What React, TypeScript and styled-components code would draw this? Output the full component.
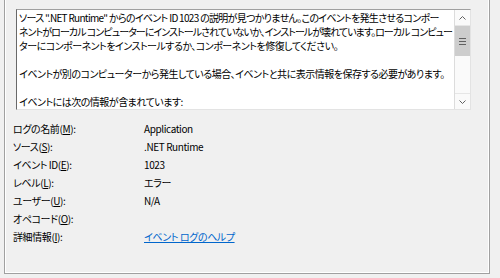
import React from "react";
import styled, { createGlobalStyle } from "styled-components";

const GlobalStyle = createGlobalStyle`
  html, body {
    margin: 0;
    padding: 0;
    background: #f0f0f0;
  }
  body {
    font-family: "Noto Sans CJK JP", "Noto Sans", sans-serif;
    font-size: 10px;
    letter-spacing: -0.4px;
    color: #000;
  }
`;

const Window = styled.div`
  width: 500px;
  height: 278px;
  overflow: hidden;
  background: #f0f0f0;
`;

const Panel = styled.div`
  margin-left: 4px;
  width: 486px;
  height: 274px;
  border-left: 1px solid #a0a0a0;
  border-right: 1px solid #a0a0a0;
  border-bottom: 1px solid #a0a0a0;
  box-shadow: inset 1px 0 #ffffff, inset -1px 0 #ffffff, inset 0 -1px #ffffff;
  padding: 9px 0 0 11px;
  box-sizing: border-box;
  font-feature-settings: "palt";
`;

const TextBox = styled.div`
  display: flex;
  width: 455px;
  height: 101px;
  box-sizing: border-box;
  background: #ffffff;
  border-top: 1px solid #a0a0a0;
  border-left: 1px solid #696969;
  border-right: 1px solid #e3e3e3;
  border-bottom: 1px solid #e3e3e3;
`;

const TextArea = styled.div`
  flex: 1;
  overflow: hidden;
  padding: 1px 0 0 2px;
`;

const Line = styled.div<{ $spacing: number }>`
  height: 14px;
  line-height: 14px;
  white-space: nowrap;
  letter-spacing: ${({ $spacing }) => `${$spacing}px`};
`;

const ScrollBar = styled.div`
  width: 15px;
  display: flex;
  flex-direction: column;
  background: #fafafa;
  border-left: 1px solid #dcdcdc;
`;

const ArrowButton = styled.div`
  height: 15px;
  display: flex;
  align-items: center;
  justify-content: center;
  border-bottom: 1px solid #e6e6e6;

  &:last-child {
    border-bottom: none;
    border-top: 1px solid #e6e6e6;
  }
`;

const Track = styled.div`
  flex: 1;
  display: flex;
  flex-direction: column;
`;

const Thumb = styled.div`
  height: 30px;
  background: #cdcdcd;
  display: flex;
  flex-direction: column;
  align-items: center;
  justify-content: center;
  gap: 2px;
`;

const Grip = styled.span`
  width: 7px;
  height: 1px;
  background: #606060;
`;

const InfoGrid = styled.div`
  display: grid;
  grid-template-columns: 131px 1fr;
  grid-auto-rows: 18px;
  align-items: center;
  margin-top: 9px;
  margin-left: -3px;
`;

const Label = styled.div`
  white-space: nowrap;
`;

const Value = styled.div`
  white-space: nowrap;
`;

const HelpLink = styled.a`
  color: #0066cc;
  text-decoration: underline;
  cursor: pointer;
`;

const Chevron = ({ up }: { up?: boolean }) => (
  <svg width="7" height="4" viewBox="0 0 7 4">
    <polyline
      points={up ? "0.5,3.5 3.5,0.5 6.5,3.5" : "0.5,0.5 3.5,3.5 6.5,0.5"}
      fill="none"
      stroke="#606060"
      strokeWidth="1"
    />
  </svg>
);

const rows: { label: string; key: string; value: string; link?: boolean }[] = [
  { label: "ログの名前(", key: "M", value: "Application" },
  { label: "ソース(", key: "S", value: ".NET Runtime" },
  { label: "イベント ID(", key: "E", value: "1023" },
  { label: "レベル(", key: "L", value: "エラー" },
  { label: "ユーザー(", key: "U", value: "N/A" },
  { label: "オペコード(", key: "O", value: "" },
  { label: "詳細情報(", key: "I", value: "イベント ログのヘルプ", link: true },
];

// letter spacing per line so the wrapped lines end where the original ones do
const lines: { text: string; spacing: number }[] = [
  { text: "ソース \".NET Runtime\" からのイベント ID 1023 の説明が見つかりません。このイベントを発生させるコンポー", spacing: -0.7 },
  { text: "ネントがローカル コンピューターにインストールされていないか、インストールが壊れています。ローカル コンピュー", spacing: -0.95 },
  { text: "ターにコンポーネントをインストールするか、コンポーネントを修復してください。", spacing: -0.5 },
  { text: "", spacing: 0 },
  { text: "イベントが別のコンピューターから発生している場合、イベントと共に表示情報を保存する必要があります。", spacing: -0.5 },
  { text: "", spacing: 0 },
  { text: "イベントには次の情報が含まれています:", spacing: -0.5 },
];

export default function App() {
  return (
    <Window>
      <GlobalStyle />
      <Panel>
        <TextBox>
          <TextArea>
            {lines.map((l, i) => (
              <Line key={i} $spacing={l.spacing}>
                {l.text || "\u00a0"}
              </Line>
            ))}
          </TextArea>
          <ScrollBar>
            <ArrowButton>
              <Chevron up />
            </ArrowButton>
            <Track>
              <Thumb>
                <Grip />
                <Grip />
                <Grip />
              </Thumb>
            </Track>
            <ArrowButton>
              <Chevron />
            </ArrowButton>
          </ScrollBar>
        </TextBox>
        <InfoGrid>
          {rows.map((r) => (
            <React.Fragment key={r.key}>
              <Label>
                {r.label}
                <u>{r.key}</u>):
              </Label>
              <Value>{r.link ? <HelpLink>{r.value}</HelpLink> : r.value}</Value>
            </React.Fragment>
          ))}
        </InfoGrid>
      </Panel>
    </Window>
  );
}
